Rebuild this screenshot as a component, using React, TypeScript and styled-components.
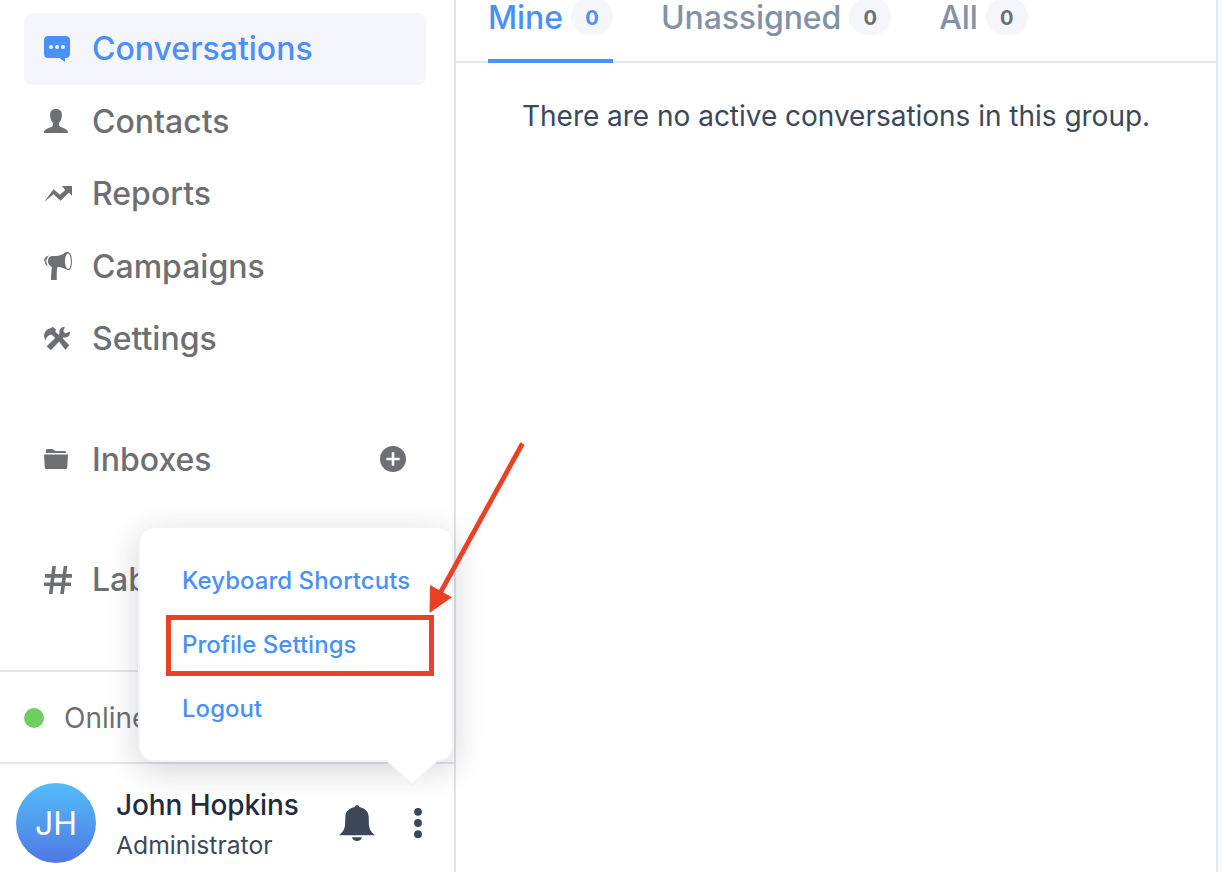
import React from 'react';
import styled, { createGlobalStyle, css } from 'styled-components';

const Global = createGlobalStyle`
  *, *::before, *::after { box-sizing: border-box; }
  body { margin: 0; background: #fff; overflow: hidden; }
`;

const blue = '#4990f8';
const gray = '#6e6f73';
const slate = '#3c4858';
const line = '#e0e6ed';
const red = '#eb4025';

const Page = styled.div`
  position: relative;
  display: flex;
  width: 1222px;
  height: 872px;
  overflow: hidden;
  background: #fff;
  font-family: Inter, 'Liberation Sans', sans-serif;
`;

const Sidebar = styled.aside`
  display: flex;
  flex-direction: column;
  width: 456px;
  border-right: 2px solid ${line};
`;

const Nav = styled.nav`
  display: flex;
  flex-direction: column;
  height: 670px;
  padding: 13px 28px 0 24px;
`;

const NavItem = styled.a<{ $active?: boolean; $gap?: number }>`
  display: flex;
  align-items: center;
  flex: none;
  height: 72px;
  margin-top: ${p => p.$gap ?? 0}px;
  padding: 0 20px;
  border-radius: 8px;
  font-size: 32px;
  font-weight: 500;
  color: ${p => (p.$active ? blue : gray)};
  background: ${p => (p.$active ? '#f4f6fb' : 'transparent')};
`;

const NavIcon = styled.svg`
  flex: none;
  width: 28px;
  height: 28px;
  margin-right: 20px;
  fill: currentColor;
  overflow: visible;
`;

const NavLabel = styled.span`
  flex: 1;
  padding-bottom: 2px;
  white-space: nowrap;
`;

const AddIcon = styled.svg`
  width: 26px;
  height: 26px;
  margin-bottom: 2px;
`;

const Status = styled.div`
  display: flex;
  align-items: center;
  gap: 20px;
  height: 92px;
  padding: 2px 24px 0;
  border-top: 2px solid ${line};
  font-size: 28px;
  color: ${gray};
`;

const StatusDot = styled.i`
  width: 20px;
  height: 20px;
  border-radius: 50%;
  background: #6fce60;
`;

const Profile = styled.div`
  display: flex;
  align-items: center;
  height: 110px;
  padding: 10px 16px 0;
  border-top: 2px solid ${line};
`;

const Avatar = styled.div`
  display: flex;
  align-items: center;
  justify-content: center;
  width: 80px;
  height: 80px;
  margin-right: 20px;
  border-radius: 50%;
  color: #fff;
  font-size: 32px;
  background: linear-gradient(180deg, #53bdfa 0%, #4f78e2 100%);
`;

const Person = styled.div`
  flex: 1;
  padding-top: 3px;
  color: ${slate};
`;

const PersonName = styled.div`
  font-size: 28px;
  line-height: 40px;
  font-weight: 500;
  letter-spacing: -0.1px;
  color: #1f2d3d;
`;

const PersonRole = styled.div`
  font-size: 24.7px;
  line-height: 40px;
`;

const BellIcon = styled.svg`
  width: 36px;
  height: 36px;
  margin-right: 38.5px;
  fill: ${slate};
`;

const MoreIcon = styled.svg`
  width: 10px;
  height: 32px;
  margin-right: 15px;
  fill: ${slate};
`;

const Main = styled.main`
  width: 762px;
  border-right: 2px solid ${line};
`;

const Tabs = styled.div`
  display: flex;
  gap: 48px;
  height: 63px;
  padding: 0 32px;
  border-bottom: 2px solid ${line};
`;

const Tab = styled.div<{ $active?: boolean }>`
  display: flex;
  gap: 8px;
  height: 63px;
  font-size: 32px;
  line-height: 36px;
  font-weight: 500;
  letter-spacing: -0.1px;
  color: ${p => (p.$active ? blue : '#8492a6')};
  ${p => p.$active && css`border-bottom: 4px solid ${blue};`}
`;

const Count = styled.span<{ $active?: boolean }>`
  width: 42px;
  height: 37px;
  margin-top: -2px;
  border-radius: 18px;
  text-align: center;
  font-size: 20px;
  line-height: 40px;
  font-weight: 700;
  color: ${p => (p.$active ? blue : gray)};
  background: ${p => (p.$active ? '#f5f7f9' : '#f4f6fb')};
`;

const Empty = styled.p`
  margin: 33px 0 0 66px;
  font-size: 28px;
  line-height: 40px;
  letter-spacing: -0.02px;
  white-space: nowrap;
  color: ${slate};
`;

const Edge = styled.div`
  flex: 1;
  background: #f8faff;
`;

const Menu = styled.div`
  position: absolute;
  left: 138px;
  top: 526px;
  width: 316px;
  height: 236px;
  padding: 20px 26px;
  border: 2px solid #f0f4f5;
  border-radius: 16px;
  background: #fff;
  box-shadow: 0 8px 32px rgba(40, 40, 60, 0.2);
`;

const MenuItem = styled.a`
  display: flex;
  align-items: center;
  height: 64px;
  padding-left: 16px;
  font-size: 24px;
  font-weight: 500;
  letter-spacing: 0.03px;
  white-space: nowrap;
  color: ${blue};
`;

const MenuTail = styled.svg`
  position: absolute;
  left: 245px;
  top: 231px;
  width: 54px;
  height: 28px;
`;

const Highlight = styled.div`
  position: absolute;
  left: 166px;
  top: 615px;
  width: 268px;
  height: 61px;
  border: 5px solid ${red};
`;

const Arrow = styled.svg`
  position: absolute;
  left: 420px;
  top: 436px;
  width: 110px;
  height: 180px;
`;

const ChatIcon = () => (
  <NavIcon viewBox="0 0 28 28">
    <path fillRule="evenodd" d="M4.500 1H21.500Q26 1 26 5.500V18.500Q26 23 21.500 23H21V27L15.500 23H4.500Q0 23 0 18.500V5.500Q0 1 4.500 1ZM7 10a2 2 0 1 0 0 4a2 2 0 1 0 0-4ZM13 10a2 2 0 1 0 0 4a2 2 0 1 0 0-4ZM19 10a2 2 0 1 0 0 4a2 2 0 1 0 0-4Z" />
  </NavIcon>
);

const PersonIcon = () => (
  <NavIcon viewBox="0 0 28 28">
    <path d="M12 1C15.800 1 18.200 3.300 17.900 7.500C17.700 11 16.500 13.500 15 15C14.700 17.500 15.200 18.500 17 19.300C20 20.300 23.800 21 24 25H0C.2 21 4 20.300 7 19.300C8.800 18.500 9.300 17.500 9 15C7.500 13.500 6.300 11 6.100 7.500C5.800 3.300 8.200 1 12 1Z" />
  </NavIcon>
);

const GraphIcon = () => (
  <NavIcon viewBox="0 0 28 28">
    <path d="M.3 21.700L9.500 9.300L16 14.800L21.200 10L18 6H28V15.700L24.800 12.700L16.500 20.800L9.500 14.300Z" />
  </NavIcon>
);

const MegaphoneIcon = () => (
  <NavIcon viewBox="0 1 28 28">
    <path fillRule="evenodd" d="M8.500 4C13 4.200 17.500 3.800 21 .8C22 0 23 0 24 0C26.700.3 28 5 28 9.500C28 14.500 26.500 18.300 24 18.300C20.500 16.500 17 14.800 13.500 15C12.500 19 12.700 23 12.800 28H7C7 23 7.500 19 7.800 14.800C5 13.500 4 12 4 9C4 6 5.500 4 8.500 4ZM24 1.600C22 2 21 5.500 21 9.300C21 13 22.200 16.700 24 16.900C25.900 16.500 26.900 13.500 26.900 9.500C26.900 5.500 25.800 2 24 1.600Z" />
    <path d="M6 3.400C2 3.600 0 6 0 9L1.400 10.200C1 7 2.300 4.700 6 3.400ZM4.300 5C1.700 7.300 1.700 11.500 4.500 14.300C1.800 13.500.6 11.500.9 9C1.100 6.900 2.300 5.500 4.300 5Z" />
  </NavIcon>
);

const ToolsIcon = () => (
  <NavIcon viewBox="0 0 28 28">
    <path d="M8.800 1.700L12 4.500L11.300 6.500L15 10.300L11.700 13.600L8 10C6.200 9.400 3.200 10.600 1.300 15.700C-.8 10.700-.2 6.500 4.300 4C6 3 8 3.200 8.800 1.700Z" />
    <path d="M14.300 15.500L17.600 12.300L25.300 20.300L21.300 24.700Z" />
    <path d="M20.800 1.700L19.300 6L21.300 8.500L25.700 6.500C26.800 9.700 24 13.300 19.500 12.300L6.800 25.300L2.700 21.300L15.500 8.700C14.500 4.700 17.300 1.700 20.800 1.700Z" />
  </NavIcon>
);

const FolderIcon = () => (
  <NavIcon viewBox="0 1 28 28">
    <path d="M1.800 8V5.500Q1.800 4 3.300 4H8.200Q9.300 4 10 5Q10.700 6 12 6H20.700Q22.200 6 22.200 7.500V8Z" />
    <path d="M0 9.500H24L23.200 22.500Q23 24 21.500 24H2.500Q1 24 .8 22.500Z" />
  </NavIcon>
);

const HashIcon = () => (
  <NavIcon viewBox="0 0 28 28">
    <path d="M8.300 0H11.900L8.600 28H4.900ZM19.700 0H23.300L19.900 28H16.200ZM1 8.100H28V11.700H1ZM0 16.500H27V20.100H0Z" />
  </NavIcon>
);

const primaryItems = [
  { label: 'Conversations', Icon: ChatIcon, active: true, gap: 0 },
  { label: 'Contacts', Icon: PersonIcon, gap: 1 },
  { label: 'Reports', Icon: GraphIcon, gap: 0 },
  { label: 'Campaigns', Icon: MegaphoneIcon, gap: 1 },
  { label: 'Settings', Icon: ToolsIcon, gap: 0 },
];

const tabs = [
  { label: 'Mine', count: 0, active: true },
  { label: 'Unassigned', count: 0 },
  { label: 'All', count: 0 },
];

export default function App() {
  return (
    <Page>
      <Global />
      <Sidebar>
        <Nav>
          {primaryItems.map(({ label, Icon, active, gap }) => (
            <NavItem key={label} $active={active} $gap={gap}>
              <Icon />
              <NavLabel>{label}</NavLabel>
            </NavItem>
          ))}
          <NavItem $gap={49}>
            <FolderIcon />
            <NavLabel>Inboxes</NavLabel>
            <AddIcon viewBox="0 0 26 26">
              <circle cx="13" cy="13" r="13" fill={gray} />
              <path d="M13 6.300V19.700M6.300 13H19.700" stroke="#fff" strokeWidth="2.600" />
            </AddIcon>
          </NavItem>
          <NavItem $gap={48}>
            <HashIcon />
            <NavLabel>Labels</NavLabel>
          </NavItem>
        </Nav>
        <Status>
          <StatusDot />
          <span>Online</span>
        </Status>
        <Profile>
          <Avatar>JH</Avatar>
          <Person>
            <PersonName>John Hopkins</PersonName>
            <PersonRole>Administrator</PersonRole>
          </Person>
          <BellIcon viewBox="0 0 36 36">
            <path d="M18 0C19.200 0 20 .8 20.200 2C25.500 3 29.500 6 29.700 12C30 20 29 25 36 30.300H0C7 25 6 20 6.300 12C6.500 6 10.500 3 15.800 2C16 .8 16.800 0 18 0ZM13 32.300H23C22.500 34.500 20.500 36 18 36C15.500 36 13.500 34.500 13 32.300Z" />
          </BellIcon>
          <MoreIcon viewBox="0 0 10 32">
            <circle cx="5" cy="4.800" r="3.900" />
            <circle cx="5" cy="16" r="3.900" />
            <circle cx="5" cy="27.200" r="3.900" />
          </MoreIcon>
        </Profile>
      </Sidebar>
      <Main>
        <Tabs>
          {tabs.map(t => (
            <Tab key={t.label} $active={t.active}>
              <span>{t.label}</span>
              <Count $active={t.active}>{t.count}</Count>
            </Tab>
          ))}
        </Tabs>
        <Empty>There are no active conversations in this group.</Empty>
      </Main>
      <Edge />
      <Menu>
        <MenuItem>Keyboard Shortcuts</MenuItem>
        <MenuItem>Profile Settings</MenuItem>
        <MenuItem>Logout</MenuItem>
        <MenuTail viewBox="0 0 54 28">
          <path d="M0 0L2 3L27 27L52 3L54 0Z" fill="#f0f4f5" />
          <path d="M0 0L2 1L27 24.500L52 1L54 0Z" fill="#fff" />
        </MenuTail>
      </Menu>
      <Highlight />
      <Arrow viewBox="420 436 110 180">
        <path d="M522.500 443.500L438 597" stroke={red} strokeWidth="4.800" />
        <path d="M429.500 613L430 585L452 597.300Z" fill={red} />
      </Arrow>
    </Page>
  );
}
